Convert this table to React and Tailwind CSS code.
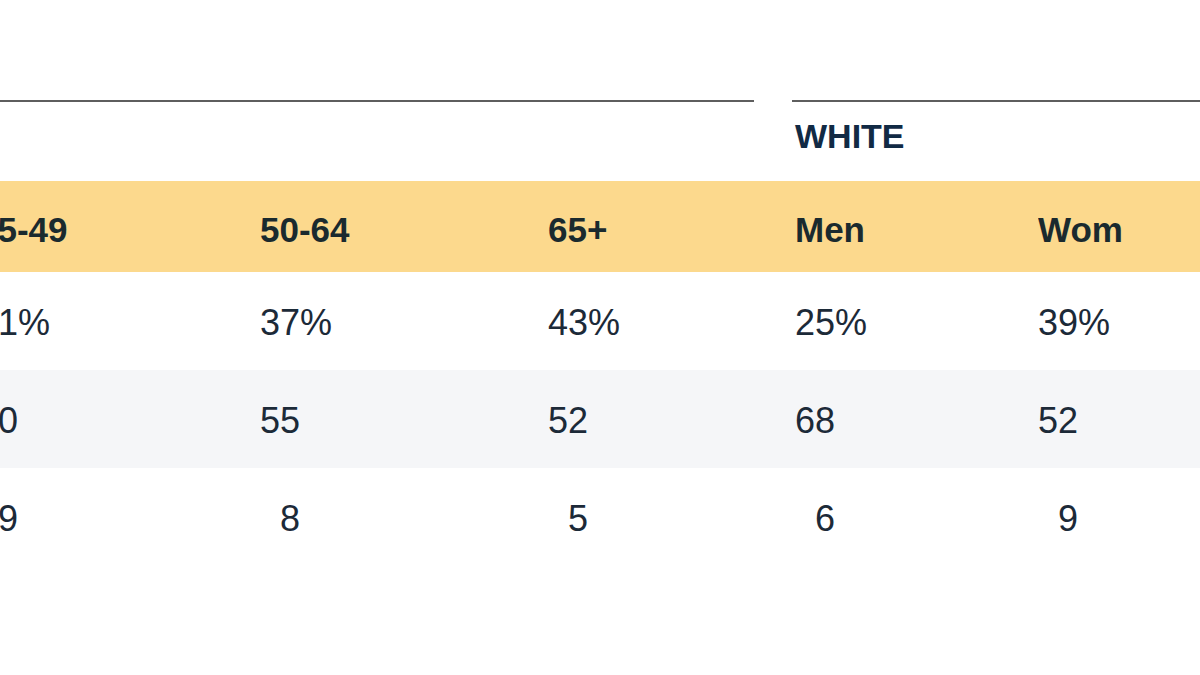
const headers = ["35-49", "50-64", "65+", "Men", "Women"];

const rows = [
  { values: ["41%", "37%", "43%", "25%", "39%"], shaded: false },
  { values: ["40", "55", "52", "68", "52"], shaded: true },
  { values: ["9", "8", "5", "6", "9"], shaded: false, pad: true },
];

export default function App() {
  return (
    <div className="h-[675px] w-[1200px] overflow-hidden bg-white font-['Liberation_Sans',Arial,sans-serif] text-[#1c2a38]">
      <div className="ml-[-25px] grid w-[1303px] grid-cols-[282px_288px_247px_243px_243px] pt-[100px]">
        {/* Group headings */}
        <div className="col-span-3 mr-[38px] h-[81px] border-t-2 border-[#5e5e5e]" />
        <div className="col-span-2 h-[81px] border-t-2 border-[#5e5e5e] pl-[3px] pt-[17px] text-[34px] font-bold leading-none text-[#112a44]">
          WHITE
        </div>

        {/* Column headings */}
        {headers.map((h, j) => (
          <div
            key={h}
            className="flex h-[91px] items-center bg-[#fcd98d] pl-[3px] pt-[5px] text-[35px] font-bold leading-none text-[#1a2a2e]"
          >
            {j === 4 ? (
              <span className="inline-block w-[84px] overflow-hidden whitespace-nowrap">{h}</span>
            ) : (
              <span className="whitespace-nowrap">{h}</span>
            )}
          </div>
        ))}

        {/* Data rows */}
        {rows.map((row, i) =>
          row.values.map((v, j) => (
            <div
              key={`${i}-${j}`}
              className={`flex h-[98px] items-center pl-[3px] pt-[4px] text-[36px] leading-none ${
                row.shaded ? "bg-[#f5f6f8]" : "bg-white"
              }`}
            >
              {row.pad ? (
                <span className="inline-block w-[2ch] text-right">{v}</span>
              ) : (
                <span className="whitespace-nowrap">{v}</span>
              )}
            </div>
          ))
        )}
      </div>
    </div>
  );
}
